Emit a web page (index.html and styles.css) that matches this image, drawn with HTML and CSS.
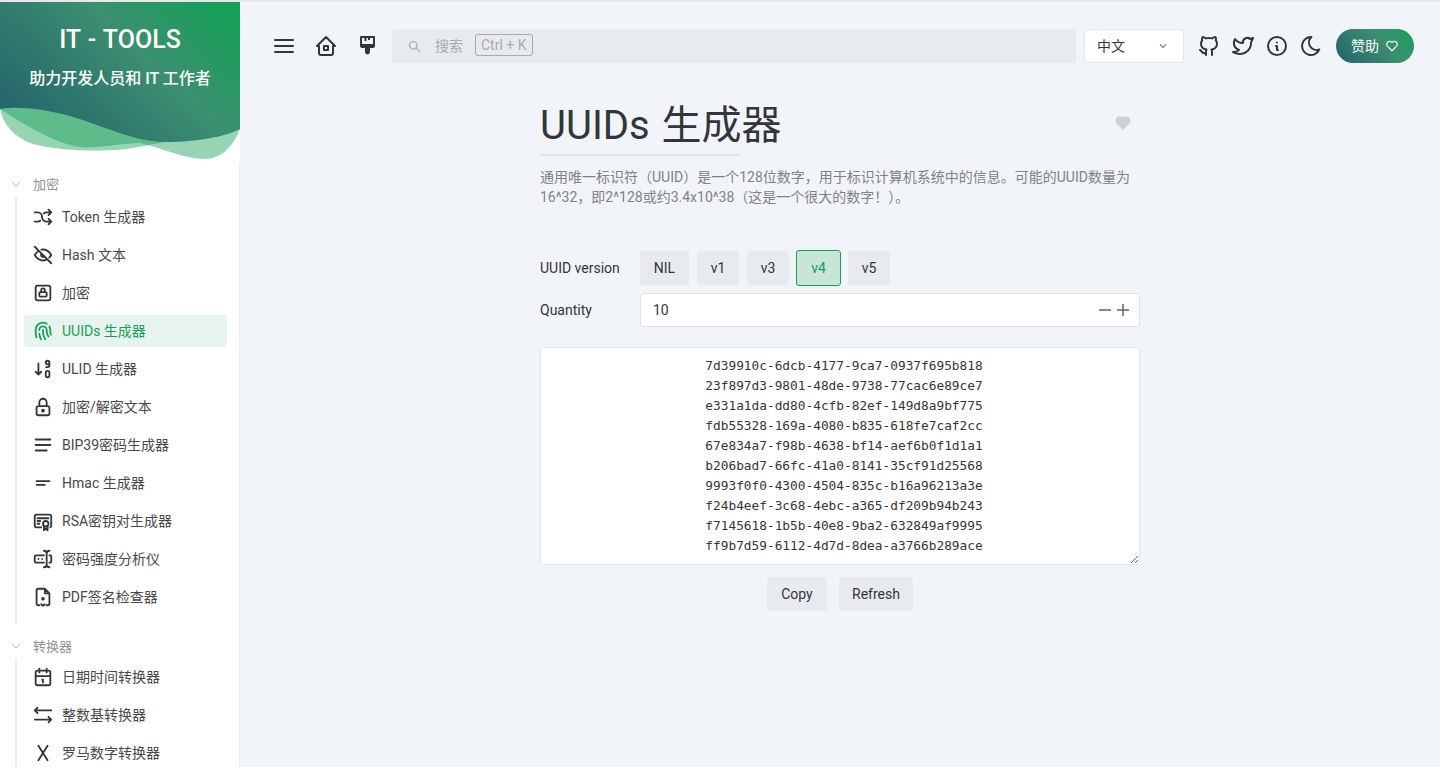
FILE: index.html
```html
<!DOCTYPE html>
<html lang="zh">
<head>
<meta charset="utf-8">
<title>UUIDs 生成器 - IT Tools</title>
<link rel="stylesheet" href="styles.css">
</head>
<body>
<div class="app">
  <aside class="sidebar">
    <div class="hero">
      <svg class="hero-art" viewBox="0 0 240 160" width="240" height="160" aria-hidden="true">
        <defs>
          <linearGradient id="heroGrad" x1="0" y1="0.8" x2="1" y2="0.2">
            <stop offset="0" stop-color="#25636c"/>
            <stop offset="0.62" stop-color="#3b8f70"/>
            <stop offset="1" stop-color="#18a058"/>
          </linearGradient>
        </defs>
        <path class="wave" d="M0 107C3 122 14 136 33 142C60 149 95 149 117 148C140 146 175 137 240 127L240 100L0 100Z"/>
        <path class="wave" d="M0 107C25 123 50 138 73 144C95 148 120 141 140 141C165 147 185 157 205 157C222 157 234 143 240 127L240 100L0 100Z"/>
        <path fill="url(#heroGrad)" d="M0 0H240V127C225 135 195 140 167 140C145 140 125 133 105 126C70 112 30 102 0 107Z"/>
      </svg>
      <div class="hero-title">IT - TOOLS</div>
      <div class="hero-sub">助力开发人员和 IT 工作者</div>
    </div>
    <nav class="menu">
      <div class="group-head"><svg class="chev" viewBox="0 0 24 24"><path d="M5 9l7 7l7-7"/></svg><span>加密</span></div>
      <div class="group-body first">
        <a class="item"><svg class="ico" viewBox="0 0 24 24"><path d="M18 4l3 3l-3 3M18 20l3-3l-3-3M3 7h3a5 5 0 0 1 5 5a5 5 0 0 0 5 5h5M21 7h-5a4.978 4.978 0 0 0-3 1m-4 8a4.984 4.984 0 0 1-3 1h-3"/></svg><span>Token 生成器</span></a>
        <a class="item"><svg class="ico" viewBox="0 0 24 24"><path d="M10.585 10.587a2 2 0 0 0 2.829 2.828M16.681 16.673a8.717 8.717 0 0 1-4.681 1.327c-3.6 0-6.6-2-9-6c1.272-2.12 2.712-3.678 4.32-4.674m2.86-1.146a9.055 9.055 0 0 1 1.82-.18c3.6 0 6.6 2 9 6c-.666 1.11-1.379 2.067-2.138 2.87M3 3l18 18"/></svg><span>Hash 文本</span></a>
        <a class="item"><svg class="ico" viewBox="0 0 24 24"><path d="M8 12a1 1 0 0 1 1-1h6a1 1 0 0 1 1 1v3a1 1 0 0 1-1 1h-6a1 1 0 0 1-1-1zM10 11v-2a2 2 0 1 1 4 0v2M4 6a2 2 0 0 1 2-2h12a2 2 0 0 1 2 2v12a2 2 0 0 1-2 2h-12a2 2 0 0 1-2-2z"/></svg><span>加密</span></a>
        <a class="item active"><svg class="ico" viewBox="0 0 24 24"><path d="M18.9 7a8 8 0 0 1 1.1 5v1a6 6 0 0 0 .8 3M8 11a4 4 0 0 1 8 0v1a10 10 0 0 0 2 6M12 11v2a14 14 0 0 0 2.5 8M8 15a18 18 0 0 0 1.8 6M4.9 19a22 22 0 0 1-.9-7v-1a8 8 0 0 1 12-6.95"/></svg><span>UUIDs 生成器</span></a>
        <a class="item"><svg class="ico" viewBox="0 0 24 24"><path d="M4 15l3 3l3-3M7 6v12M17 14a2 2 0 0 1 2 2v3a2 2 0 1 1-4 0v-3a2 2 0 0 1 2-2zM15 5a2 2 0 1 0 4 0a2 2 0 1 0-4 0M19 5v3a2 2 0 0 1-2 2h-1.5"/></svg><span>ULID 生成器</span></a>
        <a class="item"><svg class="ico" viewBox="0 0 24 24"><path d="M5 13a2 2 0 0 1 2-2h10a2 2 0 0 1 2 2v6a2 2 0 0 1-2 2h-10a2 2 0 0 1-2-2v-6zM11 16a1 1 0 1 0 2 0a1 1 0 0 0-2 0M8 11v-4a4 4 0 1 1 8 0v4"/></svg><span>加密/解密文本</span></a>
        <a class="item"><svg class="ico" viewBox="0 0 24 24"><path d="M4 6h16M4 12h16M4 18h12"/></svg><span>BIP39密码生成器</span></a>
        <a class="item"><svg class="ico" viewBox="0 0 24 24"><path d="M5 10h14M5 14h9"/></svg><span>Hmac 生成器</span></a>
        <a class="item"><svg class="ico" viewBox="0 0 24 24"><path d="M15 15m-3 0a3 3 0 1 0 6 0a3 3 0 1 0-6 0M13 17.5v4.5l2-1.5l2 1.5v-4.5M10 19h-5a2 2 0 0 1-2-2v-10c0-1.1 .9-2 2-2h14a2 2 0 0 1 2 2v10a2 2 0 0 1-1 1.73M6 9h12M6 12h3M6 15h2"/></svg><span>RSA密钥对生成器</span></a>
        <a class="item"><svg class="ico" viewBox="0 0 24 24"><path d="M13 3a3 3 0 0 1 3 3v12a3 3 0 0 1-3 3M19 3a3 3 0 0 0-3 3v12a3 3 0 0 0 3 3M13 8h-9a1 1 0 0 0-1 1v6a1 1 0 0 0 1 1h9M19 8h1a1 1 0 0 1 1 1v6a1 1 0 0 1-1 1h-1M7 12h.01M11 12h.01"/></svg><span>密码强度分析仪</span></a>
        <a class="item"><svg class="ico" viewBox="0 0 24 24"><path d="M8 21h-1a2 2 0 0 1-2-2v-14a2 2 0 0 1 2-2h7l5 5v11a2 2 0 0 1-2 2h-1M14 3v5h5M11 14a1 1 0 1 0 2 0a1 1 0 1 0-2 0M12 13.5v.01M10 20l2 1.5l2-1.5"/></svg><span>PDF签名检查器</span></a>
      </div>
      <div class="group-head"><svg class="chev" viewBox="0 0 24 24"><path d="M5 9l7 7l7-7"/></svg><span>转换器</span></div>
      <div class="group-body">
        <a class="item"><svg class="ico" viewBox="0 0 24 24"><path d="M4 7a2 2 0 0 1 2-2h12a2 2 0 0 1 2 2v12a2 2 0 0 1-2 2h-12a2 2 0 0 1-2-2zM16 3v4M8 3v4M4 11h16M11 15h1M12 15v3"/></svg><span>日期时间转换器</span></a>
        <a class="item"><svg class="ico" viewBox="0 0 24 24"><path d="M21 17h-18M6 10l-3-3l3-3M3 7h18M18 20l3-3l-3-3"/></svg><span>整数基转换器</span></a>
        <a class="item"><svg class="ico" viewBox="0 0 24 24"><path d="M7 4l10 16M17 4l-10 16"/></svg><span>罗马数字转换器</span></a>
      </div>
    </nav>
  </aside>
  <main class="main">
    <header class="topbar">
      <svg class="tico" viewBox="0 0 24 24"><path d="M3 6h18M3 12h18M3 18h18"/></svg>
      <svg class="tico" viewBox="0 0 24 24"><path d="M5 12h-2l9-9l9 9h-2M5 12v7a2 2 0 0 0 2 2h10a2 2 0 0 0 2-2v-7M10 12h4v4h-4z"/></svg>
      <svg class="tico brush" viewBox="0 0 24 24"><path d="M5 2h13a1 1 0 0 1 1 1v9a2 2 0 0 1-2 2h-3v4a2.500 2.500 0 0 1-5 0v-4h-3a2 2 0 0 1-2-2v-9a1 1 0 0 1 1-1z"/><path class="cut" d="M6 4h2.500v3h2v-3h1.500v2h2v-2h3v6h-11z"/></svg>
      <div class="search">
        <svg class="sico" viewBox="0 0 24 24"><circle cx="10" cy="10" r="6"/><path d="M15 15l6 6"/></svg>
        <span class="search-text">搜索</span>
        <span class="kbd">Ctrl + K</span>
      </div>
      <div class="lang"><span>中文</span><svg class="lang-chev" viewBox="0 0 24 24"><path d="M6 9l6 6l6-6"/></svg></div>
      <div class="links">
        <svg class="tico" viewBox="0 0 24 24"><path d="M9 19c-4.3 1.4-4.3-2.5-6-3m12 5v-3.5c0-1 .1-1.4-.5-2c2.8-.3 5.5-1.4 5.5-6a4.6 4.6 0 0 0-1.3-3.2a4.2 4.2 0 0 0-.1-3.2s-1.1-.3-3.5 1.3a12.3 12.3 0 0 0-6.2 0c-2.4-1.6-3.5-1.3-3.5-1.3a4.2 4.2 0 0 0-.1 3.2a4.6 4.6 0 0 0-1.3 3.2c0 4.6 2.7 5.7 5.5 6c-.6 .6-.6 1.2-.5 2v3.5"/></svg>
        <svg class="tico" viewBox="0 0 24 24"><path d="M22 4.01c-1 .49-1.98 .689-3 .99c-1.121-1.265-2.783-1.335-4.38-.737s-2.643 2.06-2.62 3.737v1c-3.245 .083-6.135-1.395-8-4c0 0-4.182 7.433 4 11c-1.872 1.247-3.739 2.088-6 2c3.308 1.803 6.913 2.423 10.034 1.517c3.58-1.04 6.522-3.723 7.651-7.742a13.84 13.84 0 0 0 .497-3.753c-.002-.249 1.51-2.772 1.818-4.013z"/></svg>
        <svg class="tico" viewBox="0 0 24 24"><path d="M3 12a9 9 0 1 0 18 0a9 9 0 0 0-18 0M12 8.500h.01M11 12h1v4h1"/></svg>
        <svg class="tico" viewBox="0 0 24 24"><path d="M12 3c.132 0 .263 0 .393 0a7.500 7.500 0 0 0 7.920 12.446a9 9 0 1 1-8.313-12.454z"/></svg>
      </div>
      <button class="sponsor"><span>赞助</span><svg class="sponsor-heart" viewBox="0 0 24 24"><path d="M19.500 12.572l-7.500 7.428l-7.500-7.428a5 5 0 1 1 7.500-6.572a5 5 0 1 1 7.500 6.572"/></svg></button>
    </header>
    <section class="tool">
      <div class="tool-head">
        <h1>UUIDs 生成器</h1>
        <svg class="fav" viewBox="0 0 24 24"><path d="M19.500 12.572l-7.500 7.428l-7.500-7.428a5 5 0 1 1 7.500-6.572a5 5 0 1 1 7.500 6.572"/></svg>
      </div>
      <div class="rule"></div>
      <p class="desc">通用唯一标识符（UUID）是一个128位数字，用于标识计算机系统中的信息。可能的UUID数量为16^32，即2^128或约3.4x10^38（这是一个很大的数字！）。</p>
      <div class="field version">
        <label class="label">UUID version</label>
        <div class="btns">
          <button class="btn nil">NIL</button>
          <button class="btn ver">v1</button>
          <button class="btn ver">v3</button>
          <button class="btn ver on">v4</button>
          <button class="btn ver">v5</button>
        </div>
      </div>
      <div class="field qty">
        <label class="label">Quantity</label>
        <div class="number">
          <span>10</span>
          <svg class="pm" viewBox="0 0 30 16"><path d="M0 8h12M18 8h12M24 2v12"/></svg>
        </div>
      </div>
      <textarea class="output" readonly>7d39910c-6dcb-4177-9ca7-0937f695b818
23f897d3-9801-48de-9738-77cac6e89ce7
e331a1da-dd80-4cfb-82ef-149d8a9bf775
fdb55328-169a-4080-b835-618fe7caf2cc
67e834a7-f98b-4638-bf14-aef6b0f1d1a1
b206bad7-66fc-41a0-8141-35cf91d25568
9993f0f0-4300-4504-835c-b16a96213a3e
f24b4eef-3c68-4ebc-a365-df209b94b243
f7145618-1b5b-40e8-9ba2-632849af9995
ff9b7d59-6112-4d7d-8dea-a3766b289ace</textarea>
      <div class="actions">
        <button class="btn copy">Copy</button>
        <button class="btn refresh">Refresh</button>
      </div>
    </section>
  </main>
</div>
</body>
</html>
```
FILE: styles.css
```css
* { box-sizing: border-box; }
html, body { margin: 0; height: 100%; overflow: hidden; }
body {
  font-family: Roboto, "Noto Sans CJK SC", sans-serif;
  font-size: 14px;
  color: #333639;
  background: #f1f5f9;
  border-top: 2px solid #e6e8ea;
}
.app { display: flex; height: 765px; overflow: hidden; }

.sidebar { width: 240px; flex: none; background: #fff; overflow: hidden; }
.hero { position: relative; height: 160px; width: 240px; color: #fff; text-align: center; padding-top: 21px; }
.hero-art { position: absolute; left: 0; top: 0; }
.wave { fill: #18a058; fill-opacity: .45; }
.hero-title { position: relative; font-size: 25px; line-height: 34px; font-weight: 500; word-spacing: 1px; }
.hero-sub { position: relative; font-size: 16px; line-height: 22px; margin-top: 11px; font-weight: 500; }

.menu { padding-top: 10px; border-right: 1px solid #eeeff1; height: 605px; }
.group-head { display: flex; align-items: center; height: 24px; padding-left: 10px; color: #8f9194; font-size: 13px; }
.group-head span { margin-left: 11px; padding-bottom: 2px; }
.chev { width: 12px; height: 12px; fill: none; stroke: #b6b8ba; stroke-width: 2; }
.group-body { margin-left: 15px; border-left: 2px solid #eeeff1; padding-left: 7px; margin-bottom: 10px; display: flex; flex-direction: column; padding-top: 3px; padding-bottom: 5px; }
.group-body.first { padding-top: 5px; }
.item { display: flex; align-items: center; height: 32px; margin-bottom: 6px; width: 203px; padding-left: 8px; border-radius: 3px; font-size: 14px; color: #47494c; }
.item span { margin-left: 8px; padding-bottom: 2px; }
.item.active { background: #e7f4ed; color: #18a058; }
.ico { width: 22px; height: 22px; flex: none; fill: none; stroke: #333639; stroke-width: 2; stroke-linecap: round; stroke-linejoin: round; }
.active .ico { stroke: #18a058; }

.main { flex: 1; min-width: 0; }
.topbar { display: flex; align-items: center; height: 34px; margin: 27px 26px 0 32px; }
.tico { width: 24px; height: 24px; flex: none; fill: none; stroke: #333639; stroke-width: 2; stroke-linecap: round; stroke-linejoin: round; }
.topbar > .tico { margin-right: 18px; }
.topbar > .brush { margin-right: 12px; fill: #333639; stroke: none; }
.brush .cut { fill: #f1f5f9; }
.search { flex: 1; height: 34px; background: #e7eaee; border-radius: 3px; display: flex; align-items: center; padding-left: 15px; color: #a8aaad; }
.sico { width: 15px; height: 15px; fill: none; stroke: #a8aaad; stroke-width: 2; }
.search-text { margin-left: 13px; padding-bottom: 2px; }
.kbd { margin: 0 0 2px 12px; border: 1px solid #a8aaad; border-radius: 3px; padding: 0 5px; line-height: 20px; font-size: 14px; }
.lang { width: 100px; height: 34px; margin-left: 8px; background: #fff; border: 1px solid #e6e8ec; border-radius: 3px; display: flex; align-items: center; justify-content: space-between; padding: 0 14px 0 12px; color: #333639; }
.lang span { padding-bottom: 2px; }
.lang-chev { width: 12px; height: 12px; fill: none; stroke: #808286; stroke-width: 2.4; }
.links { display: flex; gap: 10px; margin-left: 13px; }
.sponsor { width: 78px; height: 34px; margin-left: 13px; border: 0; border-radius: 17px; color: #fff; font: inherit; background: linear-gradient(48deg, #25636c 0%, #3b8f70 62%, #18a058 100%); display: flex; align-items: center; justify-content: center; gap: 6px; padding: 0; }
.sponsor span { padding-bottom: 2px; }
.sponsor-heart { width: 14px; height: 14px; fill: none; stroke: #fff; stroke-width: 2; }

.tool { width: 600px; margin: 35px 0 0 300px; }
.tool-head { display: flex; justify-content: space-between; align-items: center; height: 56px; }
h1 { margin: 0; font-size: 40px; font-weight: 400; line-height: 56px; color: #333639; word-spacing: 2px; }
.fav { width: 18px; height: 18px; fill: #cfd1d3; stroke: #cfd1d3; stroke-width: 2; margin: 0 8px 6px 0; }
.rule { width: 200px; height: 2px; background: #e2e5e8; }
.desc { margin: 11px 0 0; font-size: 14px; line-height: 20px; color: #808286; }
.field { display: flex; align-items: center; }
.label { width: 100px; flex: none; font-size: 14px; }
.version { margin-top: 44px; height: 34px; }
.qty { margin-top: 8px; height: 34px; }
.btns { display: flex; gap: 8px; }
.btn { height: 34px; border: 0; border-radius: 3px; background: #e7eaee; color: #333639; font: inherit; font-size: 14px; padding: 0; }
.nil { width: 49px; }
.ver { width: 42px; }
.btn.on { width: 45px; height: 36px; margin: -1px; border: 1px solid #18a058; background: #c8e5d7; color: #18a058; }
.copy { width: 60px; }
.refresh { width: 74px; }
.number { flex: 1; height: 34px; background: #fff; border: 1px solid #e0e2e6; border-radius: 3px; display: flex; align-items: center; justify-content: space-between; padding: 0 10px 0 12px; }
.pm { width: 30px; height: 16px; fill: none; stroke: #666; stroke-width: 1.5; }
.output { display: block; width: 600px; height: 218px; margin-top: 20px; padding: 8px 8px 8px 16px; background: #fff; border: 1px solid #e6e8ec; border-radius: 3px; font-family: "DejaVu Sans Mono", monospace; font-size: 12.8px; line-height: 20px; text-align: center; color: #333639; outline: none; overflow: hidden; }
.actions { display: flex; justify-content: center; gap: 12px; margin-top: 12px; }
```
